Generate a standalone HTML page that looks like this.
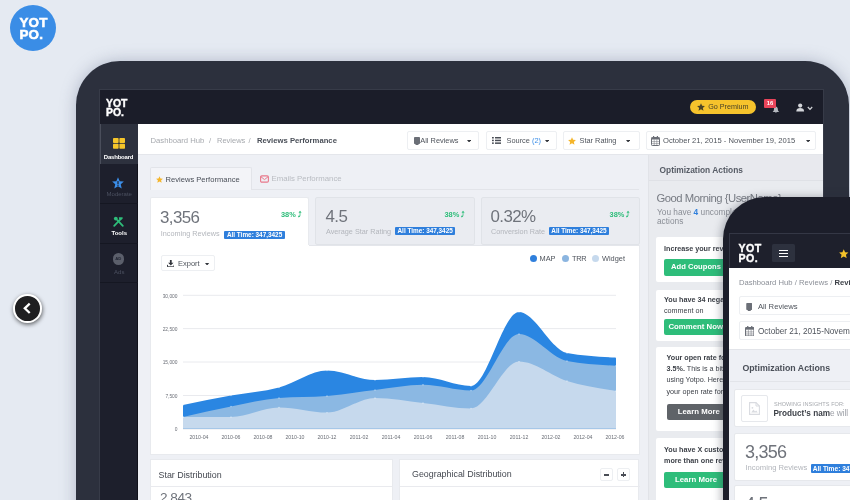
<!DOCTYPE html>
<html lang="en">
<head>
<meta charset="utf-8">
<title>Yotpo Dashboard</title>
<style>
*{box-sizing:border-box;margin:0;padding:0}
html,body{width:850px;height:500px;overflow:hidden}
body{background:#e5eaf2;font-family:"Liberation Sans",sans-serif;color:#555b66;position:relative}
.abs{position:absolute}
#screen,#logo,#phonescreen{will-change:transform}
.t{position:absolute;white-space:nowrap;line-height:1}
#logo{left:9.5px;top:5px;width:46px;height:46px;border-radius:50%;background:#3a8de6}
#logo .t{color:#fff;font-weight:bold;font-size:13.4px;letter-spacing:0.25px;left:9.4px;-webkit-text-stroke:0.55px #fff}
#prev{left:13.4px;top:294.3px;width:28.6px;height:28.6px;border-radius:50%;background:#1f1f21;border:2px solid #fff;box-shadow:0.5px 1.5px 4px rgba(0,0,0,.6)}
#tablet{left:76px;top:61px;width:773px;height:460px;border-radius:44px 44px 0 0;background:#2c303d;box-shadow:0 0 16px rgba(100,110,140,.4)}
#screen{left:100px;top:90px;width:723px;height:410px;background:#eef0f5;overflow:hidden;box-shadow:0 0 0 1px #373b48}
.btn{position:absolute;background:#fff;border:1px solid #edeff2;border-radius:2px}
.card{position:absolute;border-radius:2px}
.badge{position:absolute;background:#2f7fdc;color:#fff;font-weight:bold;font-size:6.4px;line-height:8.4px;height:8.4px;width:59.5px;text-align:center;white-space:nowrap;border-radius:1px}
.big{position:absolute;white-space:nowrap;line-height:1;font-size:16.9px;color:#6f737b;letter-spacing:-0.6px}
.gbtn{position:absolute;color:#fff;font-weight:bold;font-size:7px;text-align:center;border-radius:2px;white-space:nowrap}
</style>
</head>
<body>
<div id="logo" class="abs"><span class="t" style="top:10.75px">YOT</span><span class="t" style="top:23.25px">PO.</span></div>
<div id="prev" class="abs"><svg class="abs" style="left:0;top:0" width="24.6" height="24.6" viewBox="0 0 24.6 24.6"><path d="M13.9 8.4 L9.8 12.3 L13.9 16.2" fill="none" stroke="#fff" stroke-width="2.3" stroke-linecap="square"/></svg></div>
<div id="tablet" class="abs"></div>
<div id="screen" class="abs">
<div class="abs" style="left:-100px;top:-90px;width:850px;height:500px">
<!-- top bar -->
<div class="abs" style="left:100px;top:90px;width:723px;height:34px;background:#1b1d29"></div>
<span class="t" style="left:106px;top:98.8px;font-size:10.4px;font-weight:bold;color:#fff;-webkit-text-stroke:0.4px #fff">YOT</span>
<span class="t" style="left:106px;top:107.8px;font-size:10.4px;font-weight:bold;color:#fff;-webkit-text-stroke:0.4px #fff">PO.</span>
<div class="abs" style="left:690px;top:100px;width:65.5px;height:14px;border-radius:7px;background:#f6c32c"></div>
<svg class="abs" style="left:697px;top:103px" width="8" height="8" viewBox="0 0 10 10"><path d="M5 0.3 L6.4 3.5 L9.9 3.8 L7.3 6.1 L8.1 9.6 L5 7.8 L1.9 9.6 L2.7 6.1 L0.1 3.8 L3.6 3.5 Z" fill="#4a4327"/></svg>
<span class="t" style="left:708.2px;top:103.4px;font-size:7.2px;color:#4a4327">Go Premium</span>
<svg class="abs" style="left:772.3px;top:105.6px" width="7.8" height="7.8" viewBox="0 0 9 9"><path d="M4.5 0.6 C2.7 0.9 2.3 2.6 2.2 4.2 C2.1 5.5 1.4 6.2 0.7 6.8 L8.3 6.8 C7.6 6.2 6.9 5.5 6.8 4.2 C6.7 2.6 6.3 0.9 4.5 0.6 Z M3.5 7.4 A1 1 0 0 0 5.5 7.4 Z" fill="#b4b7be"/></svg>
<div class="abs" style="left:763.8px;top:99.1px;width:12.3px;height:9.1px;background:#e8445a;border-radius:1px"></div>
<span class="t" style="left:763.8px;top:100.9px;width:12.3px;text-align:center;font-size:5.8px;color:#fff;font-weight:bold">16</span>
<svg class="abs" style="left:796px;top:102.5px" width="9" height="9" viewBox="0 0 9 9"><circle cx="4.2" cy="2.6" r="2.1" fill="#d4d6da"/><path d="M0.3 8.6 C0.3 5.8 2 5 4.2 5 C6.4 5 8.1 5.8 8.1 8.6 Z" fill="#d4d6da"/></svg>
<svg class="abs" style="left:806.5px;top:105.5px" width="6" height="5" viewBox="0 0 6 5"><path d="M0.8 1 L3 3.4 L5.2 1" fill="none" stroke="#d4d6da" stroke-width="1.2"/></svg>

<!-- sidebar -->
<div class="abs" style="left:100px;top:124px;width:38px;height:376px;background:#1d1f2c;border-right:1px solid #10111a"></div>
<div class="abs" style="left:100px;top:124px;width:37.5px;height:39.5px;background:#2d313e;border-left:1.5px solid #4a4e5b"></div>
<div class="abs" style="left:100px;top:202.5px;width:37.5px;height:1px;background:#151722"></div>
<div class="abs" style="left:100px;top:243px;width:37.5px;height:1px;background:#151722"></div>
<div class="abs" style="left:100px;top:281.5px;width:37.5px;height:1px;background:#151722"></div>
<svg class="abs" style="left:112.5px;top:137.5px" width="12" height="11" viewBox="0 0 12 11"><rect x="0" y="0" width="5.6" height="5" rx="0.8" fill="#f6c62a"/><rect x="6.4" y="0" width="5.6" height="5" rx="0.8" fill="#f6c62a"/><rect x="0" y="5.8" width="5.6" height="5" rx="0.8" fill="#f6c62a"/><rect x="6.4" y="5.8" width="5.6" height="5" rx="0.8" fill="#f6c62a"/></svg>
<span class="t" style="left:100px;width:38.5px;text-align:center;top:153.7px;font-size:6px;font-weight:bold;color:#fff;letter-spacing:-0.2px;margin-left:-0.7px">Dashboard</span>
<svg class="abs" style="left:112px;top:177px" width="12" height="12" viewBox="0 0 10 10"><path d="M5 0.3 L6.4 3.5 L9.9 3.8 L7.3 6.1 L8.1 9.6 L5 7.8 L1.9 9.6 L2.7 6.1 L0.1 3.8 L3.6 3.5 Z" fill="#3b8ee8"/><rect x="4.5" y="3.4" width="1" height="2.6" fill="#1e2130"/><rect x="4.5" y="6.5" width="1" height="0.9" fill="#1e2130"/></svg>
<span class="t" style="left:100px;width:38.5px;text-align:center;top:191px;font-size:6px;color:#4b5060">Moderate</span>
<svg class="abs" style="left:113px;top:216px" width="11" height="11" viewBox="0 0 11 11"><path d="M1.2 9.8 L6.6 4.2" stroke="#2ebd7a" stroke-width="1.8" fill="none" stroke-linecap="round"/><path d="M9.8 9.8 L4.4 4.2" stroke="#2ebd7a" stroke-width="1.8" fill="none" stroke-linecap="round"/><path d="M5.8 1.2 L9.6 1.2 L9.6 2.8 L7.6 4.6 L6.2 3.4 Z" fill="#2ebd7a"/><circle cx="2.8" cy="2.6" r="1.9" fill="#2ebd7a"/></svg>
<span class="t" style="left:100px;width:38.5px;text-align:center;top:230px;font-size:6px;font-weight:bold;color:#fff">Tools</span>
<div class="abs" style="left:112.5px;top:253.2px;width:11.5px;height:11.5px;border-radius:50%;background:#5b5f6b"></div>
<span class="t" style="left:112.5px;width:11.5px;text-align:center;top:257px;font-size:4.2px;font-weight:bold;color:#1e2130">AD</span>
<span class="t" style="left:100px;width:38.5px;text-align:center;top:269px;font-size:6px;color:#4b5060">Ads</span>

<!-- breadcrumb bar -->
<div class="abs" style="left:138px;top:124px;width:685px;height:30.5px;background:#fff;border-bottom:1px solid #e4e6eb"></div>
<span class="t" style="left:150.5px;top:137.2px;font-size:7.7px;color:#a6a9ae">Dashboard Hub</span>
<span class="t" style="left:209px;top:137.2px;font-size:7.7px;color:#a6a9ae">/</span>
<span class="t" style="left:217px;top:137.2px;font-size:7.5px;color:#a6a9ae">Reviews</span>
<span class="t" style="left:248.5px;top:137.2px;font-size:7.7px;color:#a6a9ae">/</span>
<span class="t" style="left:257px;top:137.2px;font-size:7.7px;font-weight:bold;color:#4a4f58">Reviews Performance</span>

<div class="btn" style="left:407px;top:131px;width:72px;height:18.5px"></div>
<svg class="abs" style="left:413.5px;top:136.5px" width="6" height="8" viewBox="0 0 6 8"><rect x="0" y="0" width="6" height="7" rx="0.8" fill="#6b6f77"/><rect x="1.5" y="6.5" width="3" height="1.5" fill="#6b6f77"/></svg>
<span class="t" style="left:420.3px;top:136.6px;font-size:7.4px;color:#4f545c">All Reviews</span>
<svg class="abs" style="left:467.3px;top:139.6px" width="4.2" height="2.6" viewBox="0 0 5 3"><path d="M0 0 L5 0 L2.5 3 Z" fill="#33363c"/></svg>

<div class="btn" style="left:485.7px;top:131px;width:71.3px;height:18.5px"></div>
<svg class="abs" style="left:491.5px;top:137px" width="9" height="7" viewBox="0 0 9 7"><g fill="#4a4e56"><rect x="0" y="0" width="1.8" height="1.5"/><rect x="3" y="0" width="6" height="1.5"/><rect x="0" y="2.7" width="1.8" height="1.5"/><rect x="3" y="2.7" width="6" height="1.5"/><rect x="0" y="5.4" width="1.8" height="1.5"/><rect x="3" y="5.4" width="6" height="1.5"/></g></svg>
<span class="t" style="left:506.5px;top:136.6px;font-size:7.4px;color:#4f545c">Source <span style="color:#3b8ee8">(2)</span></span>
<svg class="abs" style="left:545.3px;top:139.6px" width="4.2" height="2.6" viewBox="0 0 5 3"><path d="M0 0 L5 0 L2.5 3 Z" fill="#33363c"/></svg>

<div class="btn" style="left:562.5px;top:131px;width:77px;height:18.5px"></div>
<svg class="abs" style="left:568px;top:136.5px" width="8" height="8" viewBox="0 0 10 10"><path d="M5 0.3 L6.4 3.5 L9.9 3.8 L7.3 6.1 L8.1 9.6 L5 7.8 L1.9 9.6 L2.7 6.1 L0.1 3.8 L3.6 3.5 Z" fill="#f5b52a"/></svg>
<span class="t" style="left:579.5px;top:136.6px;font-size:7.4px;color:#4f545c">Star Rating</span>
<svg class="abs" style="left:626.3px;top:139.6px" width="4.2" height="2.6" viewBox="0 0 5 3"><path d="M0 0 L5 0 L2.5 3 Z" fill="#33363c"/></svg>

<div class="btn" style="left:646px;top:131px;width:169.5px;height:18.5px"></div>
<svg class="abs" style="left:651px;top:135.5px" width="9" height="10" viewBox="0 0 9 10"><rect x="0.5" y="1.5" width="8" height="8" rx="0.8" fill="none" stroke="#6b6f77" stroke-width="1"/><rect x="0.5" y="1.5" width="8" height="2" fill="#6b6f77"/><rect x="2" y="0" width="1.2" height="2.4" fill="#6b6f77"/><rect x="5.8" y="0" width="1.2" height="2.4" fill="#6b6f77"/><path d="M0.5 5.6 H8.5 M0.5 7.6 H8.5 M3.2 3.5 V9.5 M5.8 3.5 V9.5" stroke="#6b6f77" stroke-width="0.5"/></svg>
<span class="t" style="left:663px;top:136.6px;font-size:7.6px;color:#4f545c">October 21, 2015 - November 19, 2015</span>
<svg class="abs" style="left:805.9px;top:139.6px" width="4.2" height="2.6" viewBox="0 0 5 3"><path d="M0 0 L5 0 L2.5 3 Z" fill="#33363c"/></svg>
<!-- right panel -->
<div class="abs" style="left:647.5px;top:155px;width:176px;height:345px;background:#e9ebef;border-left:1px solid #e1e3e8"></div>
<div class="abs" style="left:648.5px;top:155px;width:175px;height:25.5px;background:#e8e9ee;border-bottom:1px solid #dfe1e6"></div>
<span class="t" style="left:659.5px;top:165.7px;font-size:8.4px;font-weight:bold;color:#575c66">Optimization Actions</span>
<span class="t" style="left:656.5px;top:193.2px;font-size:11.3px;letter-spacing:-0.5px;color:#777b83">Good Morning {UserName}</span>
<span class="t" style="left:657px;top:207.8px;font-size:8.3px;color:#8a8e96">You have <b style="color:#2f7fdc">4</b> uncompleted</span>
<span class="t" style="left:657px;top:217.2px;font-size:8.3px;color:#8a8e96">actions</span>

<div class="card" style="left:656px;top:236.8px;width:170px;height:45.2px;background:#fff"></div>
<span class="t" style="left:664px;top:245.1px;font-size:7.2px;font-weight:bold;color:#3d4148">Increase your review rate</span>
<div class="gbtn" style="left:664px;top:259px;width:64px;height:16.5px;line-height:16.5px;background:#2ebd7a;font-size:7.6px">Add Coupons</div>

<div class="card" style="left:656px;top:290px;width:170px;height:50.5px;background:#fff"></div>
<span class="t" style="left:664px;top:295.6px;font-size:7.2px;font-weight:bold;color:#3d4148">You have 34 negative</span>
<span class="t" style="left:664px;top:307px;font-size:7.2px;color:#3d4148">comment on</span>
<div class="gbtn" style="left:664px;top:318.8px;width:63.5px;height:16px;line-height:16px;background:#2ebd7a;font-size:7.8px">Comment Now</div>

<div class="card" style="left:656px;top:346.5px;width:170px;height:84.5px;background:#fff"></div>
<span class="t" style="left:666.5px;top:353.5px;font-size:7.2px;font-weight:bold;color:#3d4148">Your open rate for</span>
<span class="t" style="left:666.5px;top:365px;font-size:7.2px;color:#3d4148"><b>3.5%.</b> This is a bit low</span>
<span class="t" style="left:666.5px;top:376.3px;font-size:7.2px;color:#3d4148">using Yotpo. Here is</span>
<span class="t" style="left:666.5px;top:387.6px;font-size:7.2px;color:#3d4148">your open rate for</span>
<div class="gbtn" style="left:666.5px;top:403.5px;width:64.5px;height:16.5px;line-height:16.5px;background:#5f6368;font-size:7.8px">Learn More</div>

<div class="card" style="left:656px;top:438px;width:170px;height:70px;background:#fff"></div>
<span class="t" style="left:664px;top:446px;font-size:7.2px;font-weight:bold;color:#3d4148">You have X customers</span>
<span class="t" style="left:664px;top:457.4px;font-size:7.2px;font-weight:bold;color:#3d4148">more than one review</span>
<div class="gbtn" style="left:664px;top:471.5px;width:64px;height:16.5px;line-height:16.5px;background:#2ebd7a;font-size:7.8px">Learn More</div>

<!-- tabs -->
<div class="abs" style="left:150px;top:188.6px;width:489px;height:1px;background:#e2e4e9"></div>
<div class="abs" style="left:150px;top:166.5px;width:101.5px;height:23px;background:#f3f4f8;border:1px solid #e2e4e9;border-bottom:none;border-radius:2px 2px 0 0"></div>
<svg class="abs" style="left:155.5px;top:176px" width="7" height="7" viewBox="0 0 10 10"><path d="M5 0.3 L6.4 3.5 L9.9 3.8 L7.3 6.1 L8.1 9.6 L5 7.8 L1.9 9.6 L2.7 6.1 L0.1 3.8 L3.6 3.5 Z" fill="#f5b52a"/></svg>
<span class="t" style="left:165.5px;top:175.8px;font-size:7.6px;color:#4a4f58">Reviews Performance</span>
<svg class="abs" style="left:259.5px;top:175px" width="9" height="8" viewBox="0 0 9 8"><rect x="0.6" y="0.9" width="7.8" height="6.2" rx="1.2" fill="none" stroke="#e8778a" stroke-width="1.1"/><path d="M1 1.8 L4.5 4.6 L8 1.8" fill="none" stroke="#e8778a" stroke-width="1"/></svg>
<span class="t" style="left:271.5px;top:174.9px;font-size:7.8px;color:#b9bcc2">Emails Performance</span>

<!-- stat cards -->
<div class="card" style="left:150px;top:196.7px;width:159px;height:50px;background:#fff;border:1px solid #e8eaee;border-bottom:none"></div>
<span class="big" style="left:160px;top:210.2px">3,356</span>
<span class="t" style="left:160.8px;top:229.8px;font-size:7.25px;color:#b3b6bc">Incoming Reviews</span>
<div class="badge" style="left:223.8px;top:230.5px;width:61.5px">All Time: 347,3425</div>
<span class="t" style="left:281px;top:211.3px;font-size:7.4px;color:#2ebd7a;font-weight:bold">38% <span style="font-size:6.6px">⤴</span></span>

<div class="card" style="left:315px;top:196.7px;width:159.5px;height:48.3px;background:#eaecf1;border:1px solid #e0e3e8"></div>
<span class="big" style="left:325.5px;top:209px">4.5</span>
<span class="t" style="left:326px;top:227.5px;font-size:7.25px;color:#b3b6bc">Average Star Rating</span>
<div class="badge" style="left:395.4px;top:227px">All Time: 347,3425</div>
<span class="t" style="left:444.5px;top:211.3px;font-size:7.4px;color:#2ebd7a;font-weight:bold">38% <span style="font-size:6.6px">⤴</span></span>

<div class="card" style="left:480.5px;top:196.7px;width:159px;height:48.3px;background:#eaecf1;border:1px solid #e0e3e8"></div>
<span class="big" style="left:490.5px;top:209px">0.32%</span>
<span class="t" style="left:491px;top:227.5px;font-size:7.25px;color:#b3b6bc">Conversion Rate</span>
<div class="badge" style="left:549.2px;top:227px">All Time: 347,3425</div>
<span class="t" style="left:609.6px;top:211.3px;font-size:7.4px;color:#2ebd7a;font-weight:bold">38% <span style="font-size:6.6px">⤴</span></span>

<!-- chart panel -->
<div class="abs" style="left:150px;top:245px;width:489.5px;height:210px;background:#fff;border:1px solid #e8eaee;border-top:none"></div>
<div class="abs" style="left:309px;top:244.5px;width:330px;height:1px;background:#e4e6eb"></div>
<div class="btn" style="left:160.7px;top:254.6px;width:54px;height:16.8px"></div>
<svg class="abs" style="left:166.5px;top:260px" width="7.6" height="7.2" viewBox="0 0 8 8"><path d="M3 0 H5 V3 H7 L4 6 L1 3 H3 Z" fill="#33363c"/><path d="M0.3 5.4 V7.6 H7.7 V5.4" fill="none" stroke="#33363c" stroke-width="1.1"/></svg>
<span class="t" style="left:178px;top:259.6px;font-size:7.5px;color:#4f545c">Export</span>
<svg class="abs" style="left:205.4px;top:262.6px" width="4.2" height="2.6" viewBox="0 0 5 3"><path d="M0 0 L5 0 L2.5 3 Z" fill="#33363c"/></svg>

<div class="abs" style="left:529.5px;top:254.5px;width:7px;height:7px;border-radius:50%;background:#2f7fdc"></div>
<span class="t" style="left:539.5px;top:254.8px;font-size:7.4px;color:#4f545c">MAP</span>
<div class="abs" style="left:562.3px;top:254.5px;width:7px;height:7px;border-radius:50%;background:#8bb5e0"></div>
<span class="t" style="left:572px;top:254.8px;font-size:7.4px;letter-spacing:-0.35px;color:#4f545c">TRR</span>
<div class="abs" style="left:591.5px;top:254.5px;width:7px;height:7px;border-radius:50%;background:#c6d9ed"></div>
<span class="t" style="left:602px;top:254.8px;font-size:7.4px;color:#4f545c">Widget</span>

<svg class="abs" style="left:0;top:0" width="850" height="500" viewBox="0 0 850 500">
<g stroke="#e9eaee" stroke-width="1"><path d="M183 295.3 H616 M183 328.6 H616 M183 362 H616 M183 395.5 H616"/></g>
<path d="M183 428.8 H616" stroke="#d5d7dc" stroke-width="1"/>
<path d="M183.0 405.0 C199.0 401.8 215.0 398.5 231.0 395.6 C247.0 392.7 263.0 391.7 279.0 387.5 C295.0 383.3 311.0 370.5 327.0 370.5 C343.0 370.5 359.0 380.0 375.0 380.0 C391.0 380.0 407.0 377.0 423.0 377.0 C439.0 377.0 455.0 386.0 471.0 386.0 C487.0 386.0 503.0 312.0 519.0 312.0 C535.0 312.0 551.0 350.1 567.0 353.0 C583.3 356.0 599.7 356.8 616.0 357.5 L616.0 428.6 L183.0 428.6 Z" fill="#2a86e2"/>
<path d="M183.0 417.0 C199.0 413.3 215.0 409.7 231.0 406.5 C247.0 403.3 263.0 399.3 279.0 398.0 C295.0 396.7 311.0 397.3 327.0 396.0 C343.0 394.7 359.0 391.9 375.0 390.0 C391.0 388.1 407.0 384.8 423.0 384.8 C439.0 384.8 455.0 390.5 471.0 390.5 C487.0 390.5 503.0 334.0 519.0 334.0 C535.0 334.0 551.0 357.9 567.0 361.0 C583.3 364.1 599.7 364.9 616.0 365.7 L616.0 428.6 L183.0 428.6 Z" fill="#8bb8e3"/>
<path d="M183.0 417.0 C199.0 417.0 215.0 417.0 231.0 417.0 C247.0 417.0 263.0 407.5 279.0 407.5 C295.0 407.5 311.0 412.6 327.0 412.6 C343.0 412.6 359.0 398.0 375.0 398.0 C391.0 398.0 407.0 401.2 423.0 403.0 C439.0 404.8 455.0 408.5 471.0 408.5 C487.0 408.5 503.0 361.6 519.0 361.6 C535.0 361.6 551.0 376.1 567.0 381.0 C583.3 386.0 599.7 388.5 616.0 391.0 L616.0 428.6 L183.0 428.6 Z" fill="#c6d9ed"/>
<g fill="#fff" opacity="0.55"><circle cx="183.0" cy="405.0" r="0.7"/><circle cx="231.0" cy="395.6" r="0.7"/><circle cx="279.0" cy="387.5" r="0.7"/><circle cx="327.0" cy="370.5" r="0.7"/><circle cx="375.0" cy="380.0" r="0.7"/><circle cx="423.0" cy="377.0" r="0.7"/><circle cx="471.0" cy="386.0" r="0.7"/><circle cx="519.0" cy="312.0" r="0.7"/><circle cx="567.0" cy="353.0" r="0.7"/><circle cx="616.0" cy="357.5" r="0.7"/><circle cx="183.0" cy="417.0" r="0.7"/><circle cx="231.0" cy="406.5" r="0.7"/><circle cx="279.0" cy="398.0" r="0.7"/><circle cx="327.0" cy="396.0" r="0.7"/><circle cx="375.0" cy="390.0" r="0.7"/><circle cx="423.0" cy="384.8" r="0.7"/><circle cx="471.0" cy="390.5" r="0.7"/><circle cx="519.0" cy="334.0" r="0.7"/><circle cx="567.0" cy="361.0" r="0.7"/><circle cx="616.0" cy="365.7" r="0.7"/><circle cx="183.0" cy="417.0" r="0.7"/><circle cx="231.0" cy="417.0" r="0.7"/><circle cx="279.0" cy="407.5" r="0.7"/><circle cx="327.0" cy="412.6" r="0.7"/><circle cx="375.0" cy="398.0" r="0.7"/><circle cx="423.0" cy="403.0" r="0.7"/><circle cx="471.0" cy="408.5" r="0.7"/><circle cx="519.0" cy="361.6" r="0.7"/><circle cx="567.0" cy="381.0" r="0.7"/><circle cx="616.0" cy="391.0" r="0.7"/></g>

<g font-family="Liberation Sans, sans-serif" font-size="4.85" fill="#6b6f77" text-anchor="end">
<text x="177.5" y="297.5">30,000</text><text x="177.5" y="330.8">22,500</text><text x="177.5" y="364.2">15,000</text><text x="177.5" y="397.7">7,500</text><text x="177.5" y="430.6">0</text>
</g>
<g font-family="Liberation Sans, sans-serif" font-size="5.2" fill="#6b6f77" text-anchor="middle">
<text x="199" y="438.6">2010-04</text><text x="231" y="438.6">2010-06</text><text x="263" y="438.6">2010-08</text><text x="295" y="438.6">2010-10</text><text x="327" y="438.6">2010-12</text><text x="359" y="438.6">2011-02</text><text x="391" y="438.6">2011-04</text><text x="423" y="438.6">2011-06</text><text x="455" y="438.6">2011-08</text><text x="487" y="438.6">2011-10</text><text x="519" y="438.6">2011-12</text><text x="551" y="438.6">2012-02</text><text x="583" y="438.6">2012-04</text><text x="615" y="438.6">2012-06</text>
</g>
</svg>

<!-- bottom panels -->
<div class="abs" style="left:150px;top:459.4px;width:243px;height:50px;background:#fff;border:1px solid #e8eaee"></div>
<div class="abs" style="left:150px;top:486px;width:243px;height:1px;background:#e9eaee"></div>
<span class="t" style="left:158.5px;top:471.4px;font-size:8.9px;color:#454951">Star Distribution</span>
<span class="big" style="left:160px;top:491.2px;font-size:13.6px;letter-spacing:-0.5px">2,843</span>
<div class="abs" style="left:398.8px;top:459.2px;width:240.2px;height:50px;background:#fff;border:1px solid #e8eaee"></div>
<div class="abs" style="left:399px;top:486px;width:240.5px;height:1px;background:#e9eaee"></div>
<span class="t" style="left:412px;top:469.9px;font-size:8.9px;color:#454951">Geographical Distribution</span>
<div class="btn" style="left:600.2px;top:468.4px;width:13px;height:12.5px"></div>
<div class="abs" style="left:604.2px;top:474px;width:5px;height:1.5px;background:#4a4e56"></div>
<div class="btn" style="left:617.2px;top:468.4px;width:13px;height:12.5px"></div>
<div class="abs" style="left:621.2px;top:474px;width:5px;height:1.5px;background:#4a4e56"></div>
<div class="abs" style="left:622.95px;top:472.25px;width:1.5px;height:5px;background:#4a4e56"></div>

</div>

</div>
<div class="abs" style="left:722.8px;top:197px;width:200px;height:340px;border-radius:42px 0 0 0;background:#1c1e2a;box-shadow:-2px 0 8px rgba(40,45,60,.35)"></div>
<div id="phonescreen" class="abs" style="left:728.6px;top:232.5px;width:122px;height:268px;background:#eef0f5;overflow:hidden">
<div class="abs" style="left:-728.6px;top:-232.5px;width:850px;height:500px">
<div class="abs" style="left:728.6px;top:232.5px;width:122px;height:35.2px;background:#1e202c;border-left:1px solid #343745;border-top:1px solid #343745"></div>
<span class="t" style="left:738.2px;top:242.6px;font-size:10.6px;letter-spacing:0.4px;font-weight:bold;color:#fff;-webkit-text-stroke:0.4px #fff">YOT</span>
<span class="t" style="left:738.2px;top:252.4px;font-size:10.6px;letter-spacing:0.4px;font-weight:bold;color:#fff;-webkit-text-stroke:0.4px #fff">PO.</span>
<div class="abs" style="left:772px;top:243px;width:22.5px;height:18.4px;background:#2d313e;border-radius:1.5px"></div>
<div class="abs" style="left:779px;top:249.4px;width:8.5px;height:1.5px;background:#fff"></div>
<div class="abs" style="left:779px;top:252.3px;width:8.5px;height:1.5px;background:#fff"></div>
<div class="abs" style="left:779px;top:255.2px;width:8.5px;height:1.5px;background:#fff"></div>
<svg class="abs" style="left:839px;top:248px" width="9.5" height="9.5" viewBox="0 0 10 10"><path d="M5 0.3 L6.4 3.5 L9.9 3.8 L7.3 6.1 L8.1 9.6 L5 7.8 L1.9 9.6 L2.7 6.1 L0.1 3.8 L3.6 3.5 Z" fill="#f5c32a"/></svg>

<div class="abs" style="left:728.6px;top:267.7px;width:122px;height:81.6px;background:#fff;border-bottom:1px solid #e2e4e9"></div>
<span class="t" style="left:738.5px;top:278.8px;font-size:7.65px;word-spacing:0.1px;color:#8b8f97">Dashboard Hub / Reviews / <b style="color:#3d4148">Reviews Performance</b></span>
<div class="btn" style="left:738.2px;top:295.6px;width:130px;height:19px"></div>
<svg class="abs" style="left:745.2px;top:302px" width="6.5" height="8" viewBox="0 0 6 8"><rect x="0" y="0" width="6" height="7" rx="0.8" fill="#6b6f77"/><rect x="1.5" y="6.5" width="3" height="1.5" fill="#6b6f77"/></svg>
<span class="t" style="left:757.5px;top:302.4px;font-size:7.7px;color:#4f545c">All Reviews</span>
<div class="btn" style="left:738.2px;top:320px;width:130px;height:19px"></div>
<svg class="abs" style="left:744.4px;top:325.2px" width="9.5" height="10.5" viewBox="0 0 9 10"><rect x="0.5" y="1.5" width="8" height="8" rx="0.8" fill="none" stroke="#6b6f77" stroke-width="1"/><rect x="0.5" y="1.5" width="8" height="2" fill="#6b6f77"/><rect x="2" y="0" width="1.2" height="2.4" fill="#6b6f77"/><rect x="5.8" y="0" width="1.2" height="2.4" fill="#6b6f77"/><path d="M0.5 5.6 H8.5 M0.5 7.6 H8.5 M3.2 3.5 V9.5 M5.8 3.5 V9.5" stroke="#6b6f77" stroke-width="0.5"/></svg>
<span class="t" style="left:757.5px;top:327.1px;font-size:8.2px;color:#4f545c">October 21, 2015-November 19, 2015</span>

<div class="abs" style="left:729.5px;top:380px;width:120px;height:1px;background:#e2e4e9"></div>
<span class="t" style="left:742px;top:363.6px;font-size:8.8px;font-weight:bold;color:#4a4f58">Optimization Actions</span>

<div class="card" style="left:733.8px;top:388.6px;width:130px;height:38px;background:#fff;border:1px solid #e6e8ec"></div>
<div class="abs" style="left:740.3px;top:394.6px;width:27.2px;height:27.2px;background:#fff;border:1px solid #e6e8ec;border-radius:2px"></div>
<svg class="abs" style="left:748.5px;top:401.5px" width="11" height="13" viewBox="0 0 11 13"><path d="M0.6 0.6 H7 L10.4 4 V12.4 H0.6 Z" fill="none" stroke="#d9dbe0" stroke-width="1.1"/><path d="M7 0.6 V4 H10.4" fill="none" stroke="#d9dbe0" stroke-width="1"/><path d="M2.2 10.6 L4.4 7.6 L6 9.4 L7.2 8.4 L8.8 10.6 Z" fill="#d9dbe0"/><circle cx="3.4" cy="5.8" r="0.9" fill="#d9dbe0"/></svg>
<span class="t" style="left:773.5px;top:401px;font-size:5.55px;color:#a6a9ae;letter-spacing:0.05px">SHOWING INSIGHTS FOR:</span>
<span class="t" style="left:773px;top:409.3px;font-size:8.2px;color:#9a9da4"><b style="color:#3d4148">Product’s nam</b>e will be here</span>

<div class="card" style="left:733.8px;top:432.5px;width:130px;height:47.5px;background:#fff;border:1px solid #e6e8ec"></div>
<span class="big" style="left:744.5px;top:442.2px;font-size:18px;letter-spacing:-0.75px">3,356</span>
<span class="t" style="left:745px;top:463.6px;font-size:7.65px;color:#b3b6bc">Incoming Reviews</span>
<div class="badge" style="left:811px;top:463.6px;font-size:6.6px;height:9.4px;line-height:9.4px">All Time: 347,3425</div>
<div class="card" style="left:733.8px;top:484.6px;width:130px;height:46px;background:#fff;border:1px solid #e6e8ec"></div>
<span class="big" style="left:744.5px;top:494.4px;font-size:18px;letter-spacing:-0.75px">4.5</span>
</div>
</div>

</body>
</html>
